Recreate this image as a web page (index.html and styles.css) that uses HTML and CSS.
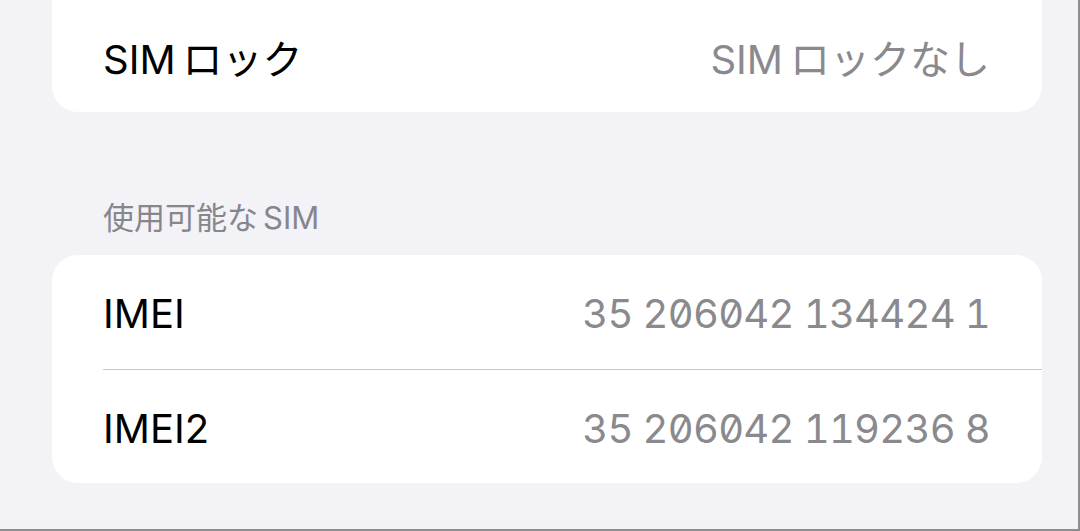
FILE: index.html
```html
<!DOCTYPE html>
<html lang="ja">
<head>
<meta charset="utf-8">
<title>情報</title>
<link rel="stylesheet" href="styles.css">
</head>
<body>
<div class="screen">
  <section class="group group-cont">
    <div class="row">
      <span class="label"><span class="latin-before">SIM</span>ロック</span>
      <span class="value"><span class="latin-before">SIM</span>ロックなし</span>
    </div>
  </section>

  <h2 class="group-header">使用可能な<span class="latin-after">SIM</span></h2>
  <section class="group">
    <div class="row">
      <span class="label">IMEI</span>
      <span class="value num">35 206042 134424 1</span>
    </div>
    <div class="row">
      <span class="label">IMEI2</span>
      <span class="value num">35 206042 119236 8</span>
    </div>
  </section>
</div>
</body>
</html>
```

FILE: styles.css
```css
html, body {
  margin: 0;
  padding: 0;
  background: #f2f2f7;
}

body {
  font-family: Inter, "Noto Sans CJK JP", sans-serif;
  -webkit-font-smoothing: antialiased;
}

.screen {
  width: 1080px;
  height: 531px;
  box-sizing: border-box;
  overflow: hidden;
  padding: 0 36px 0 52px;
  border-right: 2px solid #8d8d90;
  border-bottom: 2px solid #8d8d90;
}

.group {
  background: #ffffff;
  border-radius: 26px;
  overflow: hidden;
}

/* the first group continues above the visible area */
.group-cont {
  margin-top: -2px;
  border-radius: 0 0 26px 26px;
}

.row {
  height: 114px;
  margin-left: 51px;
  padding: 3px 52px 0 0;
  display: flex;
  align-items: center;
  justify-content: space-between;
  box-sizing: border-box;
  font-size: 40px;
}

.row + .row {
  border-top: 1px solid #c8c8cc;
}

.label {
  color: #000000;
}

.value {
  color: #8a8a8e;
}

/* spacing between Latin and Japanese runs */
.latin-before {
  margin-right: 7px;
}

.latin-after {
  margin-left: 5px;
}

.num {
  font-feature-settings: "zero" 1, "tnum" 1;
  letter-spacing: -0.75px;
}

.group-header {
  margin: 87px 0 18px 51px;
  font-size: 31px;
  line-height: 38px;
  font-weight: 400;
  color: #86868b;
}
```
